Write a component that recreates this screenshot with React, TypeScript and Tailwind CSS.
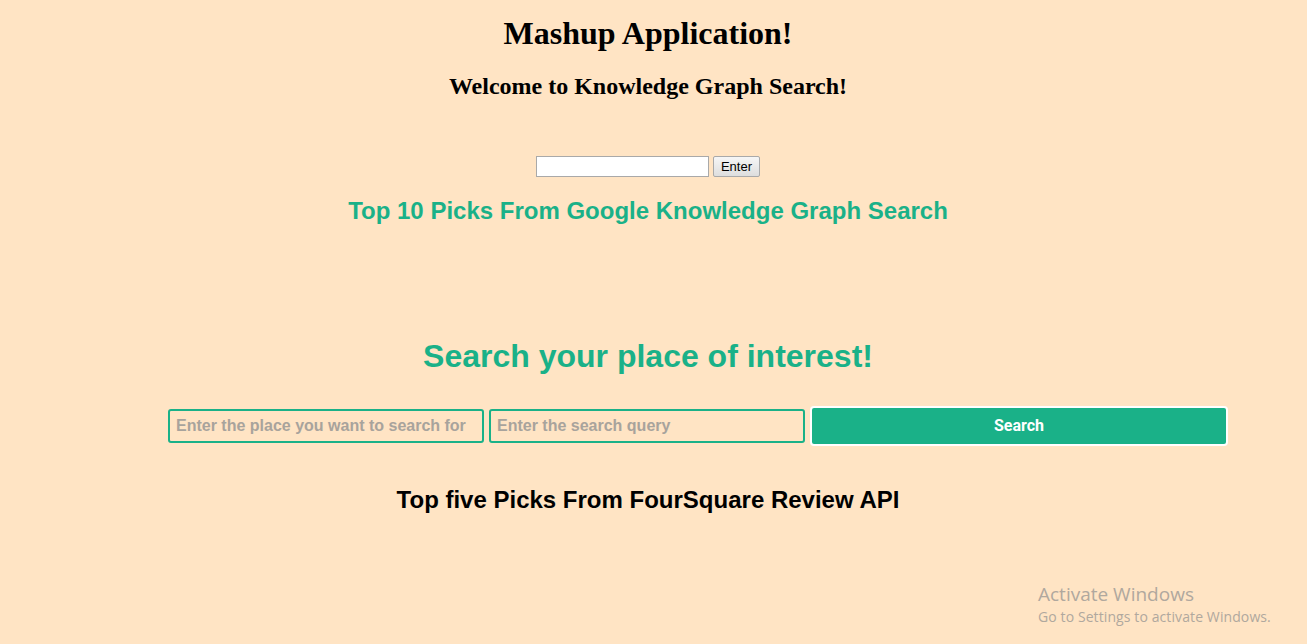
import React, { useState } from 'react'

export default function App() {
  const [term, setTerm] = useState('')
  const [place, setPlace] = useState('')
  const [query, setQuery] = useState('')

  return (
    <div className='relative min-h-[644px] w-full bg-[#ffe4c4] overflow-hidden'>
      <div className='flex flex-col items-center w-[1296px]'>
        <h1 className="pt-[15px] text-[32px] leading-[37px] font-bold text-black [font-family:'Liberation_Serif',serif]">
          Mashup Application!
        </h1>
        <h2 className="mt-[20px] text-[24px] leading-[28px] font-bold text-black [font-family:'Liberation_Serif',serif]">
          Welcome to Knowledge Graph Search!
        </h2>

        <div className='mt-[56px] flex items-center gap-[4px]'>
          <input
            type='text'
            value={term}
            onChange={(e) => setTerm(e.target.value)}
            className='w-[173px] h-[21px] bg-white border border-[#a9a9a9] px-1 text-[13px] outline-none'
          />
          <button className="h-[21px] w-[47px] border border-[#a9a9a9] rounded-[2px] bg-gradient-to-b from-[#f6f6f6] to-[#dedede] text-[13px] leading-[19px] text-black [font-family:'Liberation_Sans',Arial,sans-serif]">
            Enter
          </button>
        </div>

        <h3 className="mt-[20px] text-[24px] leading-[28px] font-bold text-[#1ab188] [font-family:'Liberation_Sans',Arial,sans-serif]">
          Top 10 Picks From Google Knowledge Graph Search
        </h3>

        <h2 className="mt-[113px] text-[32px] leading-[37px] font-bold text-[#1ab188] [font-family:'Liberation_Sans',Arial,sans-serif]">
          Search your place of interest!
        </h2>
      </div>

      <form
        className="mt-[31px] pl-[168px] flex items-center [font-family:'Liberation_Sans',Arial,sans-serif]"
        onSubmit={(e) => e.preventDefault()}
      >
        <input
          type='text'
          value={place}
          onChange={(e) => setPlace(e.target.value)}
          placeholder='Enter the place you want to search for'
          className='w-[316px] h-[34px] border-2 border-[#1ab188] rounded-[3px] bg-transparent pl-[6px] text-[16px] font-bold text-[#555] placeholder:text-[#a8a39c] outline-none'
        />
        <input
          type='text'
          value={query}
          onChange={(e) => setQuery(e.target.value)}
          placeholder='Enter the search query'
          className='ml-[5px] w-[316px] h-[34px] border-2 border-[#1ab188] rounded-[3px] bg-transparent pl-[6px] text-[16px] font-bold text-[#555] placeholder:text-[#a8a39c] outline-none'
        />
        <button
          type='submit'
          className="ml-[5px] w-[418px] h-[40px] border-2 border-white rounded-[4px] bg-[#1ab188] text-white text-[16px] font-bold [font-family:Roboto,sans-serif]"
        >
          Search
        </button>
      </form>

      <div className='flex flex-col items-center w-[1296px]'>
        <h3 className="mt-[40px] text-[24px] leading-[28px] font-bold text-black [font-family:'Liberation_Sans',Arial,sans-serif]">
          Top five Picks From FourSquare Review API
        </h3>
      </div>

      <div className="absolute left-[1038px] top-[582px] text-[#b0a89e] [font-family:'Open_Sans','Noto_Sans',sans-serif]">
        <p className='text-[19px] leading-[24px]'>Activate Windows</p>
        <p className='text-[14px] leading-[20px] mt-[1px] tracking-[0.1px]'>Go to Settings to activate Windows.</p>
      </div>
    </div>
  )
}
